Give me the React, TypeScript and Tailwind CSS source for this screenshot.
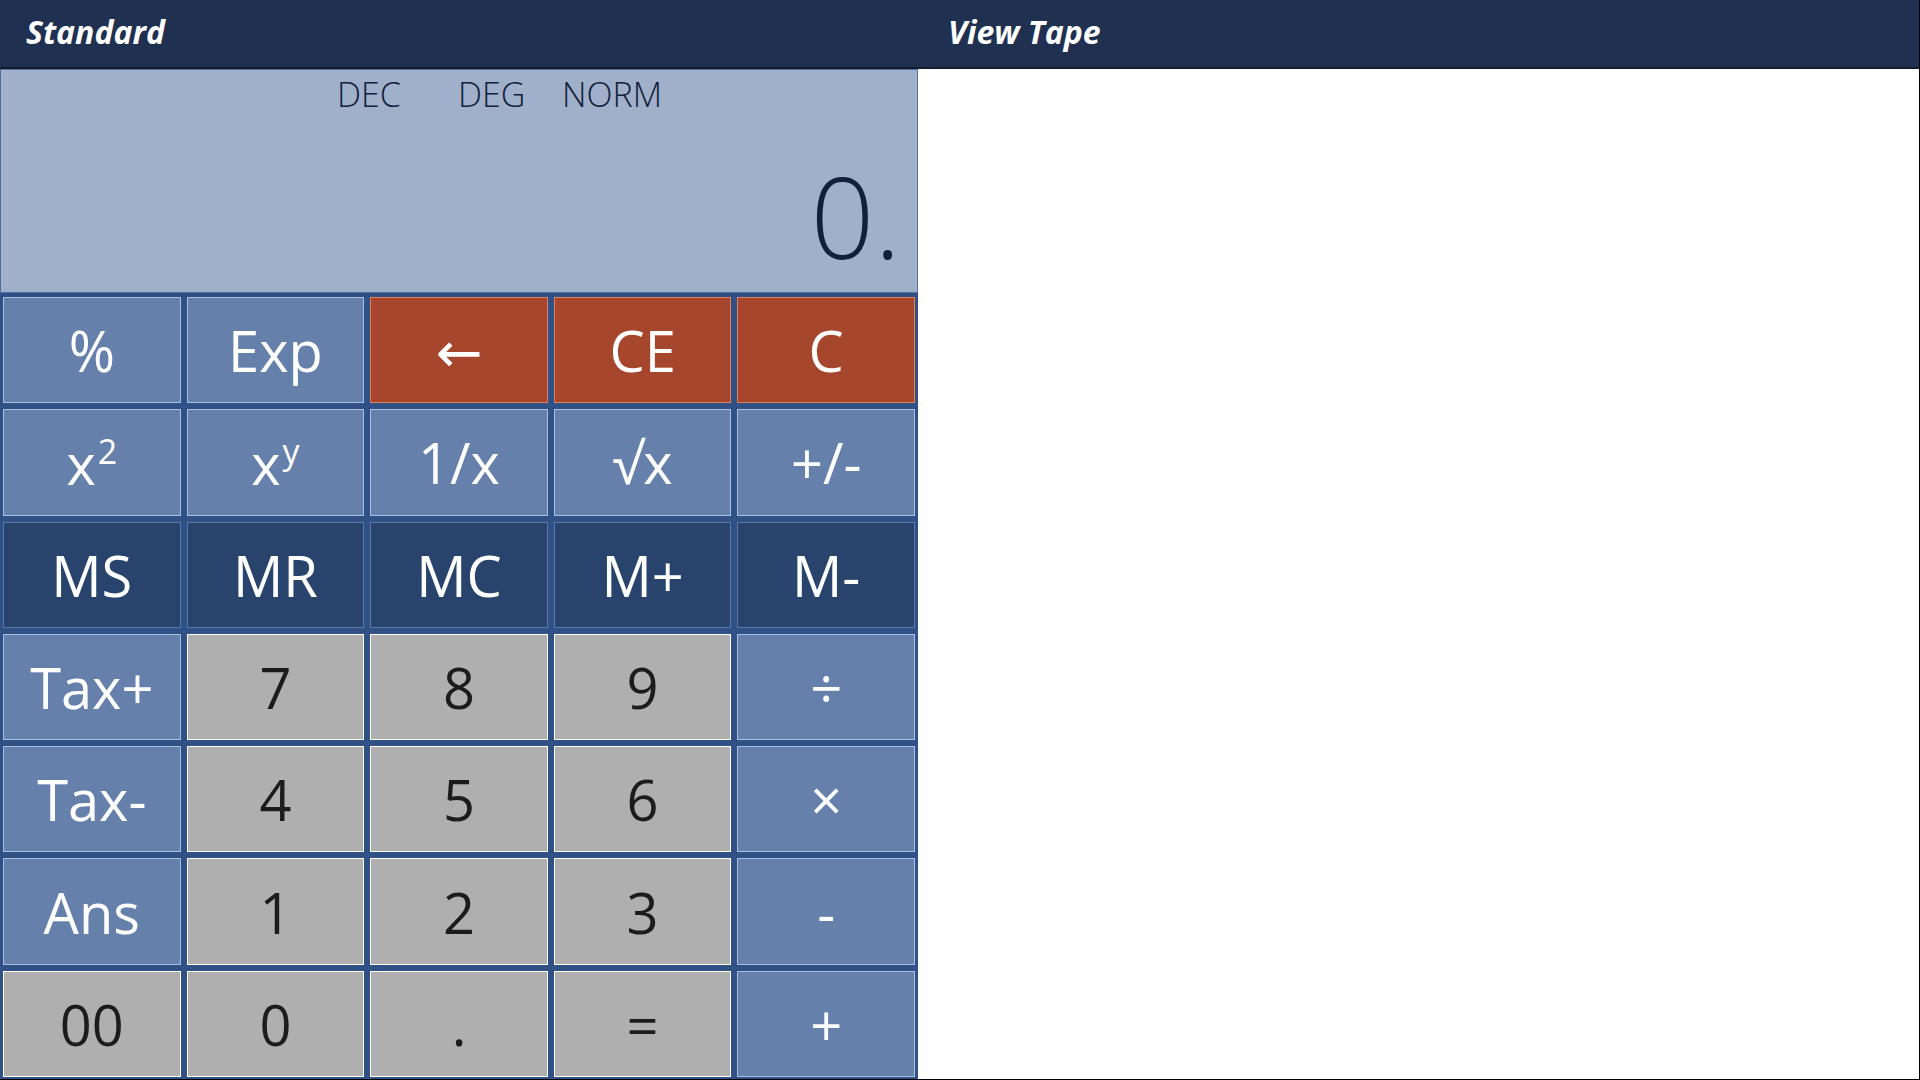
import type { ReactNode } from 'react';

type Kind = 'blue' | 'orange' | 'dark' | 'gray';

const kindClass: Record<Kind, string> = {
  blue: 'bg-[#6680ac] border-[#a9bfe4] text-white',
  orange: 'bg-[#a6462c] border-[#e58158] text-white',
  dark: 'bg-[#28446c] border-[#5b78a6] text-white',
  gray: 'bg-[#afafaf] border-white text-[#1c1c1c]',
};

const Sup = ({ base, exp }: { base: string; exp: string }) => (
  <span>
    {base}
    <span className="text-[34px] align-[0.62em] ml-[2px]">{exp}</span>
  </span>
);

const keys: { label: ReactNode; kind: Kind }[] = [
  { label: '%', kind: 'blue' },
  { label: 'Exp', kind: 'blue' },
  { label: '←', kind: 'orange' },
  { label: 'CE', kind: 'orange' },
  { label: 'C', kind: 'orange' },

  { label: <Sup base="x" exp="2" />, kind: 'blue' },
  { label: <Sup base="x" exp="y" />, kind: 'blue' },
  { label: '1/x', kind: 'blue' },
  { label: '√x', kind: 'blue' },
  { label: '+/-', kind: 'blue' },

  { label: 'MS', kind: 'dark' },
  { label: 'MR', kind: 'dark' },
  { label: 'MC', kind: 'dark' },
  { label: 'M+', kind: 'dark' },
  { label: 'M-', kind: 'dark' },

  { label: 'Tax+', kind: 'blue' },
  { label: '7', kind: 'gray' },
  { label: '8', kind: 'gray' },
  { label: '9', kind: 'gray' },
  { label: '÷', kind: 'blue' },

  { label: 'Tax-', kind: 'blue' },
  { label: '4', kind: 'gray' },
  { label: '5', kind: 'gray' },
  { label: '6', kind: 'gray' },
  { label: '×', kind: 'blue' },

  { label: 'Ans', kind: 'blue' },
  { label: '1', kind: 'gray' },
  { label: '2', kind: 'gray' },
  { label: '3', kind: 'gray' },
  { label: '-', kind: 'blue' },

  { label: '00', kind: 'gray' },
  { label: '0', kind: 'gray' },
  { label: '.', kind: 'gray' },
  { label: '=', kind: 'gray' },
  { label: '+', kind: 'blue' },
];

export default function App() {
  return (
    <div className="w-[1920px] h-[1080px] flex flex-col bg-white border-r border-b border-black overflow-hidden font-['Open_Sans','Noto_Sans','DejaVu_Sans',sans-serif]">
      {/* title bar */}
      <div className="h-[69px] shrink-0 flex bg-[#1f3050] border-b-2 border-[#141c2f] text-white font-bold italic text-[32px] leading-none">
        <div className="w-[918px] flex items-center pl-[26px] pb-[3px]">Standard</div>
        <div className="flex-1 flex items-center pl-[30px] pb-[3px]">View Tape</div>
      </div>

      <div className="flex-1 flex min-h-0">
        {/* calculator */}
        <div className="w-[918px] shrink-0 flex flex-col">
          <div className="h-[224px] shrink-0 bg-[#a0b0ca] border border-[#4f6ea3] text-[#13203a] pt-[7px] pr-[16px]">
            <div className="flex text-[34px] font-light leading-none">
              <div className="ml-[336px] w-[121px]">DEC</div>
              <div className="w-[104px]">DEG</div>
              <div>NORM</div>
            </div>
            <div className="mt-[49px] text-right text-[112px] font-light leading-none">0.</div>
          </div>

          <div className="flex-1 bg-[#2f5186] px-[3px] pt-[4px] pb-[2px] grid grid-cols-5 grid-rows-7 gap-[6px]">
            {keys.map((k, i) => (
              <div
                key={i}
                className={`flex items-center justify-center border text-[56px] leading-none ${kindClass[k.kind]}`}
              >
                {k.label}
              </div>
            ))}
          </div>
        </div>

        {/* tape */}
        <div className="flex-1 bg-white" />
      </div>
    </div>
  );
}
